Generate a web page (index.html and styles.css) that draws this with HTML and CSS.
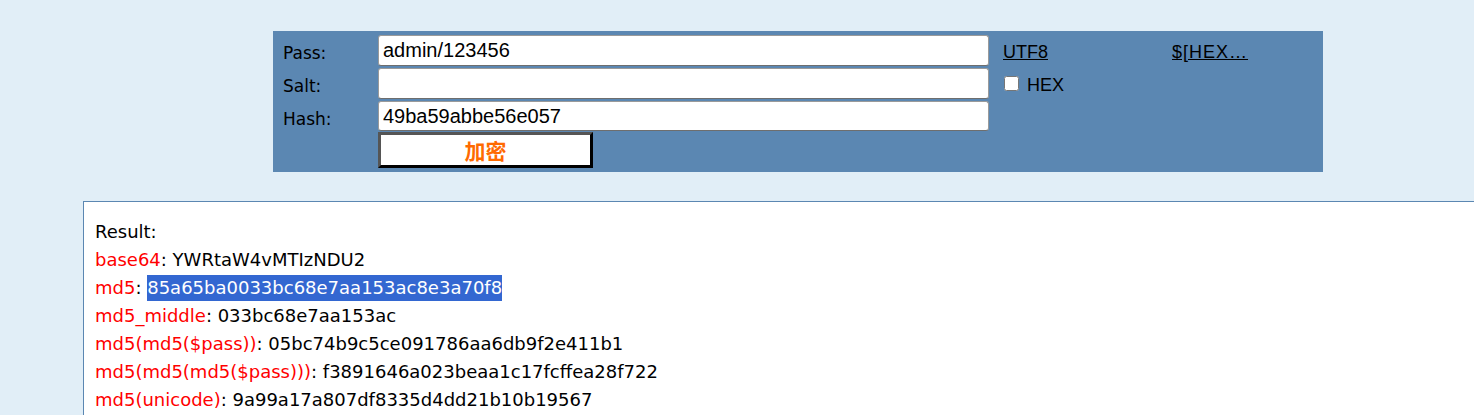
FILE: index.html
```html
<!DOCTYPE html>
<html>
<head>
<meta charset="utf-8">
<link rel="stylesheet" href="styles.css">
</head>
<body>
<div class="page">
  <form class="panel">
    <div class="labels">
      <div class="lab">Pass:</div>
      <div class="lab">Salt:</div>
      <div class="lab">Hash:</div>
    </div>
    <div class="fields">
      <input class="txt" type="text" value="admin/123456">
      <input class="txt" type="text" value="">
      <input class="txt" type="text" value="49ba59abbe56e057">
      <button class="btn" type="button">加密</button>
    </div>
    <div class="opts">
      <a class="lnk" href="#">UTF8</a>
      <label class="chk"><input type="checkbox"><span>HEX</span></label>
    </div>
    <div class="opts2">
      <a class="lnk lnk2" href="#">$[HEX…</a>
    </div>
  </form>
  <div class="result">
    <div class="line">Result:</div>
    <div class="line"><span class="k">base64</span>: YWRtaW4vMTIzNDU2</div>
    <div class="line"><span class="k">md5</span>: <span class="sel">85a65ba0033bc68e7aa153ac8e3a70f8</span></div>
    <div class="line"><span class="k">md5_middle</span>: 033bc68e7aa153ac</div>
    <div class="line"><span class="k">md5(md5($pass))</span>: 05bc74b9c5ce091786aa6db9f2e411b1</div>
    <div class="line"><span class="k">md5(md5(md5($pass)))</span>: f3891646a023beaa1c17fcffea28f722</div>
    <div class="line"><span class="k">md5(unicode)</span>: 9a99a17a807df8335d4dd21b10b19567</div>
  </div>
</div>
</body>
</html>
```
FILE: styles.css
```css
html, body {
  margin: 0;
  padding: 0;
  background: #e1eef7;
  overflow: hidden;
}
.page {
  font-family: "DejaVu Sans", Verdana, sans-serif;
  font-size: 17px;
  color: #000;
  padding-top: 31px;
}
.panel {
  margin: 0 0 0 273px;
  width: 1050px;
  height: 141px;
  box-sizing: border-box;
  background: #5b87b2;
  display: flex;
  padding: 4px 0 0 10px;
}
.labels {
  width: 95px;
  display: flex;
  flex-direction: column;
  padding-top: 2px;
}
.lab {
  height: 33px;
  line-height: 33px;
}
.fields {
  width: 611px;
  display: flex;
  flex-direction: column;
}
.txt {
  box-sizing: border-box;
  width: 611px;
  height: 31px;
  margin: 0 0 2px 0;
  border: 1px solid #9a9a9a;
  border-bottom-color: #6e6e6e;
  border-radius: 3px;
  background: #fff;
  font-family: "Liberation Sans", Arial, sans-serif;
  font-size: 20px;
  padding: 0 4px;
  color: #000;
  outline: none;
}
.txt:nth-child(3) { height: 30px; margin-bottom: 1px; }
.btn {
  box-sizing: border-box;
  width: 215px;
  height: 36px;
  background: #fff;
  border-style: solid;
  border-width: 3px;
  border-color: #555 #000 #000 #555;
  color: #ff6a00;
  font-family: "Noto Sans CJK SC", sans-serif;
  font-weight: bold;
  font-size: 21px;
  padding: 0;
  line-height: 28px;
}
.opts {
  margin-left: 14px;
  width: 169px;
  display: flex;
  flex-direction: column;
}
.lnk {
  color: #000;
  text-decoration: underline;
  font-family: "Liberation Sans", Arial, sans-serif;
  font-size: 18px;
  line-height: 34px;
}
.lnk2 { letter-spacing: 1px; }
.chk {
  display: flex;
  align-items: center;
  font-family: "Liberation Sans", Arial, sans-serif;
  font-size: 18px;
  height: 32px;
}
.chk input {
  margin: 0 8px 0 1px;
  width: 15px;
  height: 15px;
  position: relative;
  top: -2px;
}
.result {
  margin: 29px 0 0 83px;
  border: 1px solid #5b87b2;
  border-right: none;
  background: #fff;
  padding: 16px 11px 40px;
  height: 300px;
  font-size: 18px;
}
.line {
  height: 28px;
  line-height: 28px;
  white-space: nowrap;
}
.k { color: #f00; }
.sel {
  background: #3367d1;
  color: #fff;
  display: inline-block;
  line-height: 26px;
}
```
